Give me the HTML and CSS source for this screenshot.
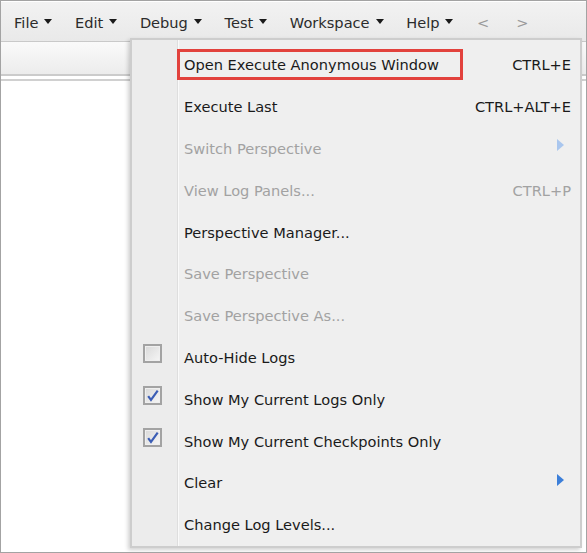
FILE: index.html
```html
<!DOCTYPE html>
<html>
<head>
<meta charset="utf-8">
<link rel="stylesheet" href="styles.css">
</head>
<body>
<div class="frame">
  <div class="menubar">
    <span class="top-item">File <span class="caret"></span></span>
    <span class="top-item">Edit <span class="caret"></span></span>
    <span class="top-item">Debug <span class="caret"></span></span>
    <span class="top-item">Test <span class="caret"></span></span>
    <span class="top-item">Workspace <span class="caret"></span></span>
    <span class="top-item">Help <span class="caret"></span></span>
    <span class="nav">&lt;</span>
    <span class="nav">&gt;</span>
  </div>
  <div class="panel-head"></div>
  <div class="panel-rule"></div>
  <div class="panel-body"></div>

  <div class="menu">
    <div class="row"><span class="icon"></span><span class="label boxed">Open Execute Anonymous Window</span><span class="key">CTRL+E</span></div>
    <div class="row"><span class="icon"></span><span class="label">Execute Last</span><span class="key">CTRL+ALT+E</span></div>
    <div class="row disabled"><span class="icon"></span><span class="label">Switch Perspective</span><span class="sub"></span></div>
    <div class="row disabled"><span class="icon"></span><span class="label">View Log Panels...</span><span class="key">CTRL+P</span></div>
    <div class="row"><span class="icon"></span><span class="label">Perspective Manager...</span></div>
    <div class="row disabled"><span class="icon"></span><span class="label">Save Perspective</span></div>
    <div class="row disabled"><span class="icon"></span><span class="label">Save Perspective As...</span></div>
    <div class="row"><span class="icon"><span class="check"></span></span><span class="label">Auto-Hide Logs</span></div>
    <div class="row"><span class="icon"><span class="check on"><svg viewBox="0 0 12 12" width="13" height="13"><path d="M2 6.5 L4.6 10 L10.8 1.5" fill="none" stroke="#3b5db5" stroke-width="2"/></svg></span></span><span class="label">Show My Current Logs Only</span></div>
    <div class="row"><span class="icon"><span class="check on"><svg viewBox="0 0 12 12" width="13" height="13"><path d="M2 6.5 L4.6 10 L10.8 1.5" fill="none" stroke="#3b5db5" stroke-width="2"/></svg></span></span><span class="label">Show My Current Checkpoints Only</span></div>
    <div class="row"><span class="icon"></span><span class="label">Clear</span><span class="sub"></span></div>
    <div class="row"><span class="icon"></span><span class="label">Change Log Levels...</span></div>
  </div>
</div>
</body>
</html>
```

FILE: styles.css
```css
html, body {
  margin: 0;
  padding: 0;
  background: #fff;
}
.frame {
  position: relative;
  width: 587px;
  height: 553px;
  box-sizing: border-box;
  border: 1px solid #a3a3a3;
  background: #fff;
  font-family: "DejaVu Sans", Tahoma, sans-serif;
  font-size: 14.6px;
  color: #1a1a1a;
  overflow: hidden;
}
.menubar {
  height: 41px;
  box-sizing: border-box;
  background: linear-gradient(#f2f2f2, #e9e9e9);
  border-top: 1px solid #fff;
  border-bottom: 1px solid #c9c9c9;
  display: flex;
  align-items: center;
  padding-left: 13px;
  padding-top: 2px;
}
.top-item {
  display: inline-flex;
  align-items: center;
  margin-right: 22.6px;
  color: #2b2b2b;
}
.caret {
  display: inline-block;
  width: 0;
  height: 0;
  margin-left: 6px;
  border-left: 4px solid transparent;
  border-right: 4px solid transparent;
  border-top: 5px solid #1a1a1a;
  margin-top: -2px;
}
.nav {
  color: #9a9a9a;
  margin-right: 26px;
  margin-left: 1px;
}
.panel-head {
  height: 32px;
  background: linear-gradient(#fafafa, #ececec);
  border-bottom: 2px solid #cbcbcb;
}
.panel-rule {
  height: 3px;
  background: #fff;
  border-bottom: 2px solid #d0d0d0;
}
.panel-body {
  height: 400px;
  background: #fff;
}
.menu {
  position: absolute;
  left: 129px;
  top: 37px;
  width: 452px;
  box-sizing: border-box;
  background: linear-gradient(90deg, #ececec 0, #ececec 45px, #dedede 45px, #dedede 46px, #fafafa 46px, #fafafa 47px, #efefef 47px);
  border: 2px solid #cdcdcd;
  padding-top: 4px;
  box-shadow: -2px 2px 4px rgba(0,0,0,0.18);
}
.row {
  height: 41.8px;
  display: flex;
  align-items: center;
  padding-right: 9px;
}
.icon {
  width: 45px;
  flex: none;
  display: flex;
  justify-content: center;
  align-items: center;
  padding-right: 4px;
  box-sizing: border-box;
  height: 100%;
}
.label {
  flex: 1;
  padding-left: 7px;
  white-space: nowrap;
}
.label.boxed {
  flex: none;
  width: 286px;
  box-sizing: border-box;
  border: 3px solid #e2423d;
  padding: 4px 4px;
  margin-bottom: 1px;
}
.row:first-child .key {
  margin-left: auto;
}
.key {
  white-space: nowrap;
}
.disabled {
  color: #a2a2a2;
}
.sub {
  width: 0;
  height: 0;
  border-top: 6px solid transparent;
  border-bottom: 6px solid transparent;
  border-left: 7px solid #3c7fd9;
  margin-right: 7px;
  margin-top: -6px;
}
.disabled .sub {
  border-left-color: #a9c6ee;
}
.check {
  width: 19px;
  height: 19px;
  box-sizing: border-box;
  border: 2px solid #a3a3a3;
  background: linear-gradient(135deg, #d9d9d9, #f6f6f6);
  display: flex;
  align-items: center;
  justify-content: center;
  margin-top: -7px;
  box-shadow: inset 0 0 0 1px #efefef;
}
```
